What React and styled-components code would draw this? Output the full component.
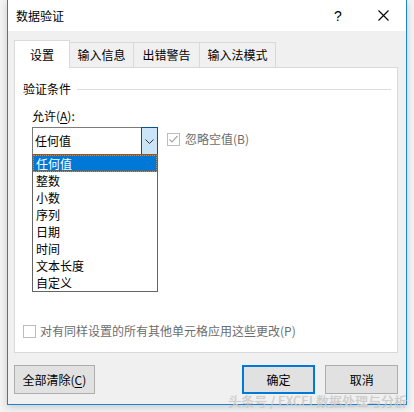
import React from 'react';
import styled, { createGlobalStyle } from 'styled-components';

const GlobalStyle = createGlobalStyle`
  html, body {
    margin: 0;
    padding: 0;
    background: #f4f4f4;
  }
  body {
    font-family: "Noto Sans CJK SC", "Noto Sans", sans-serif;
    font-size: 12px;
    color: #000;
  }
`;

const Page = styled.div`
  position: relative;
  width: 414px;
  height: 412px;
  padding-left: 7px;
  box-sizing: border-box;
  overflow: hidden;
`;

const Window = styled.div`
  width: 400px;
  height: 405px;
  box-sizing: border-box;
  border: 1px solid #1883d7;
  border-top: none;
  background: #f0f0f0;
  box-shadow: 0 2px 8px rgba(0, 0, 0, 0.18);
  display: flex;
  flex-direction: column;
`;

const TitleBar = styled.div`
  height: 31px;
  background: #fff;
  display: flex;
  align-items: center;
  padding-left: 8px;
`;

const Title = styled.div`
  flex: 1;
  font-size: 12px;
  line-height: 16px;
`;

const HelpGlyph = styled.div`
  width: 20px;
  text-align: center;
  font-family: "Liberation Sans", sans-serif;
  font-size: 14px;
  line-height: 16px;
  margin-right: 25px;
`;

const CloseButton = styled.div`
  width: 20px;
  height: 20px;
  display: flex;
  align-items: center;
  justify-content: center;
  margin-right: 13px;
`;

const Body = styled.div`
  flex: 1;
  display: flex;
  flex-direction: column;
  padding: 9px 8px 10px 6px;
`;

const TabRow = styled.div`
  display: flex;
  align-items: flex-end;
  height: 27px;
`;

const Tab = styled.div`
  position: relative;
  box-sizing: border-box;
  width: ${p => p.w}px;
  height: ${p => (p.active ? '28px' : '25px')};
  margin-bottom: ${p => (p.active ? '-1px' : '0')};
  margin-left: ${p => (p.first ? '0' : '-1px')};
  z-index: ${p => (p.active ? 2 : 1)};
  border: 1px solid #d9d9d9;
  border-bottom: none;
  background: ${p => (p.active ? '#fff' : '#f0f0f0')};
  display: flex;
  align-items: center;
  justify-content: center;
  line-height: 16px;
  padding-top: ${p => (p.active ? '1px' : '0')};
`;

const Panel = styled.div`
  position: relative;
  height: 286px;
  box-sizing: border-box;
  background: #fff;
  border: 1px solid #d9d9d9;
  padding: 13px 0 13px 8px;
  display: flex;
  flex-direction: column;
`;

const GroupHeader = styled.div`
  display: flex;
  align-items: center;
  height: 16px;
  line-height: 16px;
  margin-right: 6px;
  &::after {
    content: '';
    flex: 1;
    height: 1px;
    background: #dcdcdc;
    margin-left: 6px;
  }
`;

const Group = styled.div`
  padding-left: 9px;
`;

const FieldLabel = styled.div`
  margin-top: 11px;
  line-height: 16px;
`;

const Key = styled.span`
  text-decoration: underline;
  text-underline-offset: 2px;
`;

const ComboRow = styled.div`
  margin-top: 3px;
  display: flex;
  align-items: flex-start;
`;

const ComboWrap = styled.div`
  position: relative;
  width: 126px;
`;

const Combo = styled.div`
  display: flex;
  height: 28px;
  box-sizing: border-box;
`;

const ComboField = styled.div`
  flex: 1;
  border: 1px solid #7a7a7a;
  border-right: none;
  padding-left: 2px;
  display: flex;
  align-items: center;
  line-height: 16px;
`;

const ComboButton = styled.div`
  width: 17px;
  box-sizing: border-box;
  border: 1px solid #005499;
  background: #cce4f7;
  display: flex;
  align-items: center;
  justify-content: center;
`;

const DropList = styled.div`
  position: absolute;
  top: 27px;
  left: 0;
  width: 126px;
  box-sizing: border-box;
  border: 1px solid #646464;
  background: #fff;
  z-index: 5;
`;

const DropItem = styled.div`
  height: 17px;
  box-sizing: border-box;
  line-height: 15px;
  padding-left: 2px;
  background: ${p => (p.selected ? '#0078d7' : '#fff')};
  color: ${p => (p.selected ? '#fff' : '#000')};
  border: 1px ${p => (p.selected ? 'dotted #e0892c' : 'solid transparent')};
`;

const CheckRow = styled.label`
  display: flex;
  align-items: center;
  gap: ${p => p.gap}px;
  color: #6d6d6d;
  line-height: 16px;
  margin-top: ${p => p.top || 0}px;
  margin-left: ${p => p.left || 0}px;
`;

const CheckBox = styled.span`
  width: 13px;
  height: 13px;
  box-sizing: border-box;
  border: 1px solid #bcbcbc;
  background: #fff;
  display: flex;
  align-items: center;
  justify-content: center;
`;

const BottomCheck = styled(CheckRow)`
  margin-top: auto;
`;

const Footer = styled.div`
  margin-top: 12px;
  display: flex;
  align-items: center;
`;

const Button = styled.div`
  width: ${p => p.w}px;
  height: 29px;
  box-sizing: border-box;
  background: #e1e1e1;
  border: ${p => (p.primary ? '2px solid #0078d7' : '1px solid #adadad')};
  display: flex;
  align-items: center;
  justify-content: center;
  line-height: 16px;
  margin-left: ${p => p.ml || 0}px;
`;

const Watermark = styled.div`
  position: absolute;
  right: 7px;
  bottom: 3px;
  font-size: 13px;
  line-height: 16px;
  color: #cdcdcd;
  text-shadow: 0 0 1px rgba(0, 0, 0, 0.12);
  white-space: nowrap;
`;

const tabs = [
  { label: '设置', w: 56, active: true },
  { label: '输入信息', w: 65 },
  { label: '出错警告', w: 67 },
  { label: '输入法模式', w: 77 },
];

const options = ['任何值', '整数', '小数', '序列', '日期', '时间', '文本长度', '自定义'];

export default function App() {
  return (
    <>
      <GlobalStyle />
      <Page>
        <Window>
          <TitleBar>
            <Title>数据验证</Title>
            <HelpGlyph>?</HelpGlyph>
            <CloseButton>
              <svg width="11" height="11" viewBox="0 0 11 11">
                <path d="M0.5 0.5 L10.5 10.5 M10.5 0.5 L0.5 10.5" stroke="#000" strokeWidth="1.1" />
              </svg>
            </CloseButton>
          </TitleBar>
          <Body>
            <TabRow>
              {tabs.map((t, i) => (
                <Tab key={t.label} active={t.active} first={i === 0} w={t.w}>
                  {t.label}
                </Tab>
              ))}
            </TabRow>
            <Panel>
              <GroupHeader>验证条件</GroupHeader>
              <Group>
                <FieldLabel>
                  允许(<Key>A</Key>):
                </FieldLabel>
                <ComboRow>
                  <ComboWrap>
                    <Combo>
                      <ComboField>任何值</ComboField>
                      <ComboButton>
                        <svg width="9" height="5" viewBox="0 0 9 5">
                          <path d="M0.5 0.5 L4.5 4.5 L8.5 0.5" fill="none" stroke="#333" strokeWidth="1" />
                        </svg>
                      </ComboButton>
                    </Combo>
                    <DropList>
                      {options.map((o, i) => (
                        <DropItem key={o} selected={i === 0}>
                          {o}
                        </DropItem>
                      ))}
                    </DropList>
                  </ComboWrap>
                  <CheckRow gap={5} top={4} left={9}>
                    <CheckBox>
                      <svg width="11" height="11" viewBox="0 0 11 11">
                        <path d="M1.5 5.5 L4 8 L9.5 2" fill="none" stroke="#a8a8a8" strokeWidth="1.2" />
                      </svg>
                    </CheckBox>
                    忽略空值(B)
                  </CheckRow>
                </ComboRow>
              </Group>
              <BottomCheck gap={4}>
                <CheckBox />
                对有同样设置的所有其他单元格应用这些更改(P)
              </BottomCheck>
            </Panel>
            <Footer>
              <Button w={81}>
                全部清除(<Key>C</Key>)
              </Button>
              <Button w={74} primary ml={147}>确定</Button>
              <Button w={73} ml={10}>取消</Button>
            </Footer>
          </Body>
        </Window>
        <Watermark>头条号 / EXCEL数据处理与分析</Watermark>
      </Page>
    </>
  );
}
